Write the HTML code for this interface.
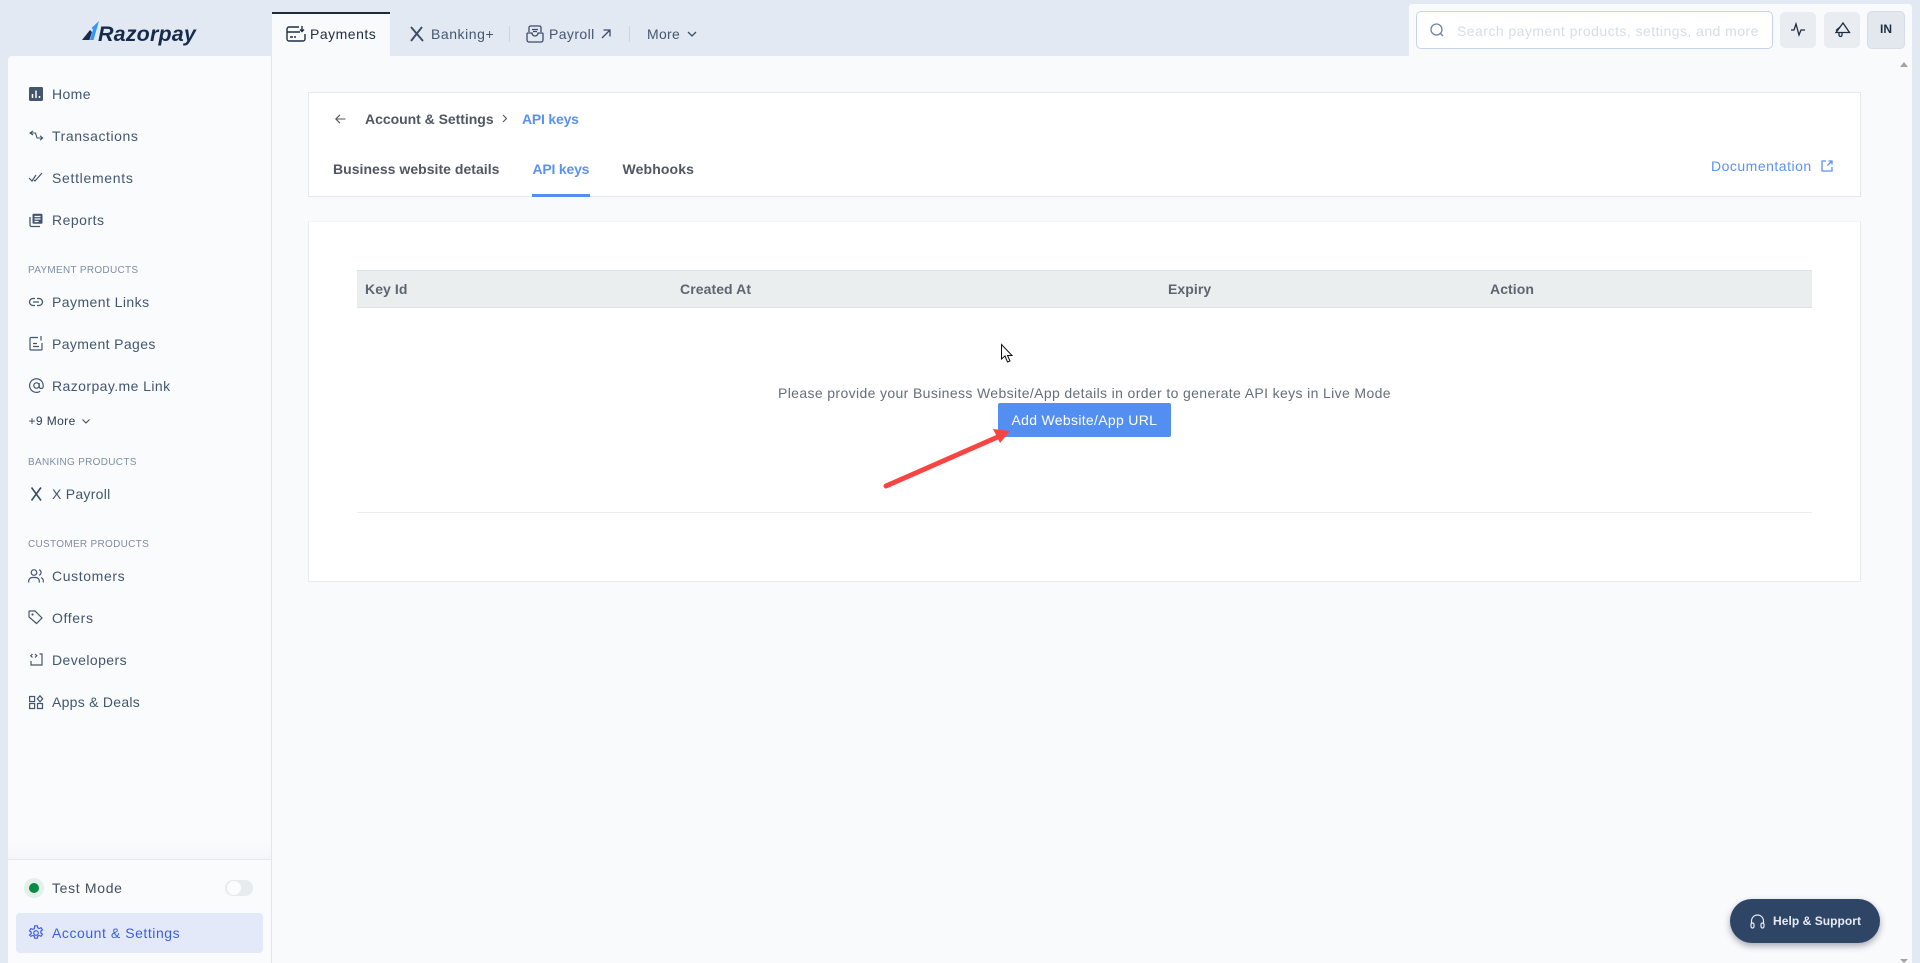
<!DOCTYPE html>
<html><head><meta charset="utf-8"><style>
*{box-sizing:border-box}
html,body{margin:0;padding:0;width:1920px;height:963px;overflow:hidden;background:#e3e9f3;font-family:"Liberation Sans",sans-serif}
.a{position:absolute}
.t{position:absolute;white-space:nowrap;line-height:20px;height:20px;font-size:14px;letter-spacing:.42px}
.n{color:#44566f;left:52px}
.h{color:#7f8da3;left:28px;font-size:10px;letter-spacing:.3px;line-height:14px;height:14px}
svg{position:absolute;overflow:visible;fill:none}
.b{font-weight:bold;color:#505662;letter-spacing:.2px}
.th{font-weight:bold;color:#5d6570;top:279px;letter-spacing:.08px}
</style></head><body>
<div class="a" style="left:8px;top:56px;width:264px;height:907px;background:#f9fbfd;border-right:1px solid #e1e5ec;border-radius:4px 0 0 0"></div>
<div class="a" style="left:272px;top:56px;width:1640px;height:907px;background:#f9fafc"></div>
<div class="a" style="left:1409px;top:4px;width:503px;height:52px;background:#f9fafc;border-radius:3px 3px 0 0"></div>

<!-- logo -->
<svg style="left:82px;top:20px" width="20" height="21" viewBox="0 0 20 21"><path d="M0 20 L8 10 L10 12 L7.500 20 Z" fill="#172b4d"/><path d="M9.500 8 L17 1 L11.500 20 H8 L11 9.500Z" fill="#3395ff"/></svg>
<div class="t" style="left:98px;top:21px;font-size:21.5px;height:26px;line-height:26px;font-weight:bold;font-style:italic;color:#172b4d;letter-spacing:.15px">Razorpay</div>

<!-- top tabs -->
<div class="a" style="left:272px;top:12px;width:118px;height:44px;background:#f9fafc;border-top:2px solid #1a2a40"></div>
<svg style="left:286px;top:26px" width="20" height="16" viewBox="0 0 20 16" stroke="#1f2d42" stroke-width="1.4"><path d="M13 1H3a2 2 0 0 0-2 2v10a2 2 0 0 0 2 2h14a2 2 0 0 0 2-2V8M1 6h13"/><path d="M4 11h3M8 11h2"/><path d="M16 0v5M14 3.500l2 2 2-2"/></svg>
<div class="t" style="left:310px;top:24px;color:#1f2d42;letter-spacing:.5px">Payments</div>
<svg style="left:410px;top:26px" width="14" height="16" viewBox="0 0 14 16" stroke="#3b4d66" stroke-width="1.900"><path d="M1 1 L13 15M12 1 L1 15"/></svg>
<div class="t" style="left:431px;top:24px;color:#44566f;letter-spacing:.55px">Banking+</div>
<div class="a" style="left:509px;top:26px;width:1px;height:16px;background:#ccd4e0"></div>
<svg style="left:526px;top:25px" width="18" height="18" viewBox="0 0 18 18" stroke="#3b4d66" stroke-width="1.300"><path d="M3 7V2.500A1.500 1.500 0 0 1 4.500 1h9A1.500 1.500 0 0 1 15 2.500V7"/><path d="M1 9a1 1 0 0 1 1-1h4a3 3 0 0 0 6 0h4a1 1 0 0 1 1 1v6a2 2 0 0 1-2 2H3a2 2 0 0 1-2-2z"/><path d="M6 4.500h6M7 6.500h4"/></svg>
<div class="t" style="left:549px;top:24px;color:#44566f;letter-spacing:.4px">Payroll</div>
<svg style="left:601px;top:29px" width="10" height="10" viewBox="0 0 10 10" stroke="#3b4d66" stroke-width="1.300"><path d="M1 9L9 1M2.500 1H9V7.500"/></svg>
<div class="a" style="left:629px;top:26px;width:1px;height:16px;background:#ccd4e0"></div>
<div class="t" style="left:647px;top:24px;color:#44566f;letter-spacing:.3px">More</div>
<svg style="left:687px;top:31px" width="10" height="6" viewBox="0 0 10 6" stroke="#3b4d66" stroke-width="1.300"><path d="M1 1l4 4 4-4"/></svg>

<!-- search -->
<div class="a" style="left:1416px;top:11px;width:357px;height:38px;background:#fff;border:1px solid #c6d3e8;border-radius:5px"></div>
<svg style="left:1430px;top:23px" width="14" height="14" viewBox="0 0 14 14" stroke="#6e87a8" stroke-width="1.300"><circle cx="6.500" cy="6.500" r="5.500"/><path d="M10.500 10.500L13 13"/></svg>
<div class="t" style="left:1457px;top:21px;color:#d7dde6;letter-spacing:.45px">Search payment products, settings, and more</div>
<div class="a" style="left:1780px;top:12px;width:36px;height:36px;background:#e9edf1;border-radius:5px"></div>
<svg style="left:1791px;top:23px" width="14" height="13" viewBox="0 0 14 13" stroke="#1f2d42" stroke-width="1.300"><path d="M0 7h3L5 1l3 11 2-5h4"/></svg>
<div class="a" style="left:1824px;top:12px;width:36px;height:36px;background:#e9edf1;border-radius:5px"></div>
<svg style="left:1835px;top:22px" width="15" height="15" viewBox="0 0 15 15" stroke="#1f2d42" stroke-width="1.300"><path d="M8 1L14.500 10.500 1 10.500z M4 10.500v2.500a1.500 1.500 0 0 0 3 0v-2"/><path d="M1 8.500L5 5"/></svg>
<div class="a" style="left:1867px;top:11px;width:38px;height:38px;background:#e3e8ee;border:1px solid #d7dde6;border-radius:5px"></div>
<div class="t" style="left:1867px;width:38px;text-align:center;top:19px;font-size:12px;font-weight:bold;color:#1f2d42;letter-spacing:0">IN</div>
<div class="a" style="left:1900px;top:62px;border-left:4.500px solid transparent;border-right:4.500px solid transparent;border-bottom:5px solid #a3a3a3"></div>
<div class="a" style="left:1900px;top:959px;border-left:4.500px solid transparent;border-right:4.500px solid transparent;border-top:4px solid #a3a3a3"></div>

<!-- sidebar -->
<svg style="left:29px;top:87px" width="14" height="14" viewBox="0 0 14 14"><rect width="14" height="14" rx="1.500" fill="#44566f"/><path d="M3.500 7v4M7 3.500V11M10.500 9v2" stroke="#f9fbfd" stroke-width="1.500"/></svg>
<div class="t n" style="top:84px;letter-spacing:.38px">Home</div>
<svg style="left:29px;top:130px" width="14" height="12" viewBox="0 0 14 12" stroke="#44566f" stroke-width="1.100"><path d="M4 1L1 3 4 5M1 3h5.500l1.500 5h5.500M11 5.800L13.700 8 11 10.200"/></svg>
<div class="t n" style="top:126px;letter-spacing:.57px">Transactions</div>
<svg style="left:29px;top:172px" width="14" height="10" viewBox="0 0 14 10" stroke="#44566f" stroke-width="1.200"><path d="M0 6l3 3 4-6M5 8l1 1 7-8"/></svg>
<div class="t n" style="top:168px;letter-spacing:.69px">Settlements</div>
<svg style="left:29px;top:213px" width="14" height="14" viewBox="0 0 14 14" stroke="#44566f" stroke-width="1.300"><path d="M1 4v8a1.500 1.500 0 0 0 1.500 1.500H11"/><rect x="3.500" y=".7" width="10" height="10" rx="1" fill="#44566f" stroke="none"/><path d="M5.500 3.500h6M5.500 6h6M5.500 8.500h4" stroke="#f9fbfd"/></svg>
<div class="t n" style="top:210px;letter-spacing:.5px">Reports</div>
<div class="t h" style="top:264px">PAYMENT PRODUCTS</div>
<svg style="left:29px;top:297px" width="14" height="10" viewBox="0 0 14 10" stroke="#44566f" stroke-width="1.300"><path d="M6 1.500H4a3.500 3.500 0 0 0 0 7h2M8 1.500h2a3.500 3.500 0 0 1 0 7H8M4 5h6"/></svg>
<div class="t n" style="top:292px;letter-spacing:.44px">Payment Links</div>
<svg style="left:29px;top:336px" width="14" height="15" viewBox="0 0 14 15" stroke="#44566f" stroke-width="1.200"><path d="M9 1.500H2a1 1 0 0 0-1 1v10.500a1 1 0 0 0 1 1h10a1 1 0 0 0 1-1V7M4 7.500h4M4 10.500h6"/><path d="M12 0v4.500"/></svg>
<div class="t n" style="top:334px;letter-spacing:.38px">Payment Pages</div>
<svg style="left:29px;top:378px" width="15" height="15" viewBox="0 0 15 15" stroke="#44566f" stroke-width="1.200"><circle cx="7.500" cy="7.500" r="2.700"/><path d="M10.200 5v3.500a2 2 0 0 0 4 0v-1a6.800 6.800 0 1 0-3 5.700"/></svg>
<div class="t n" style="top:376px">Razorpay.me Link</div>
<div class="t" style="left:28.500px;top:411px;font-size:12px;color:#2e3f58;letter-spacing:.4px">+9 More</div>
<svg style="left:82px;top:419px" width="8" height="5" viewBox="0 0 8 5" stroke="#3b4d66" stroke-width="1.100"><path d="M.5.500L4 4 7.500.500"/></svg>
<div class="t h" style="top:456px">BANKING PRODUCTS</div>
<svg style="left:31px;top:487px" width="11" height="14" viewBox="0 0 11 14" stroke="#3b4d66" stroke-width="1.600"><path d="M.500.500L10 13.500M10 .500L.500 13.500"/></svg>
<div class="t n" style="top:484px;letter-spacing:.27px">X Payroll</div>
<div class="t h" style="top:538px">CUSTOMER PRODUCTS</div>
<svg style="left:28px;top:569px" width="16" height="14" viewBox="0 0 16 14" stroke="#44566f" stroke-width="1.200"><circle cx="6" cy="3.500" r="2.800"/><path d="M.7 13.500v-1.500a3.500 3.500 0 0 1 3.500-3.500h3.600a3.500 3.500 0 0 1 3.500 3.500v1.500M11 .8a2.800 2.800 0 0 1 0 5.400M13 8.700a3.500 3.500 0 0 1 2.300 3.300v1.500"/></svg>
<div class="t n" style="top:566px;letter-spacing:.62px">Customers</div>
<svg style="left:28px;top:610px" width="15" height="15" viewBox="0 0 15 15" stroke="#44566f" stroke-width="1.200"><path d="M1 1.500a.500.500 0 0 1 .500-.500H7l7 7-5.500 5.500-7.500-6.500z"/><circle cx="4.500" cy="4.500" r=".5" fill="#44566f"/></svg>
<div class="t n" style="top:608px;letter-spacing:.62px">Offers</div>
<svg style="left:30px;top:653px" width="13" height="13" viewBox="0 0 13 13" stroke="#44566f" stroke-width="1.200"><path d="M1 8v4h11V1H9.500"/><path d="M2.500 1L.7 2.700 2.500 4.500M5 1l1.800 1.700L5 4.500"/></svg>
<div class="t n" style="top:650px">Developers</div>
<svg style="left:29px;top:695px" width="14" height="14" viewBox="0 0 14 14" stroke="#44566f" stroke-width="1.200"><rect x=".6" y="1.500" width="5" height="5"/><rect x=".6" y="8.500" width="5" height="5"/><rect x="8.500" y="8.500" width="5" height="5"/><path d="M11 .8L13.700 3.800 11 6.800 8.300 3.800z"/></svg>
<div class="t n" style="top:692px;letter-spacing:.27px">Apps &amp; Deals</div>

<div class="a" style="left:8px;top:840px;width:263px;height:19px;background:linear-gradient(#f9fbfd,#f4f6f9)"></div>
<div class="a" style="left:8px;top:859px;width:263px;height:1px;background:#e4e8ee"></div>
<div class="a" style="left:24px;top:878px;width:20px;height:20px;border-radius:50%;background:#e3f1ea"></div>
<div class="a" style="left:29px;top:883px;width:10px;height:10px;border-radius:50%;background:#0b8a45"></div>
<div class="t" style="left:52px;top:878px;color:#46505f;letter-spacing:.67px">Test Mode</div>
<div class="a" style="left:225px;top:880px;width:28px;height:16px;border-radius:8px;background:#e8ebee"></div>
<div class="a" style="left:227px;top:881px;width:14px;height:14px;border-radius:50%;background:#fbfcfd"></div>
<div class="a" style="left:16px;top:913px;width:247px;height:40px;border-radius:4px;background:#e4e9fa"></div>
<svg style="left:28px;top:925px" width="16" height="16" viewBox="0 0 16 16" stroke="#3d5ce8" stroke-width="1.200"><circle cx="8" cy="8" r="2.300"/><path d="M6.700.8h2.600l.4 2 1.500.7 1.900-.8 1.300 2.200-1.600 1.300v1.600l1.600 1.300-1.300 2.200-1.900-.8-1.500.7-.4 2H6.700l-.4-2-1.500-.7-1.900.8L1.600 10l1.600-1.300V7.100L1.600 5.800l1.300-2.200 1.900.8 1.500-.7z"/></svg>
<div class="t" style="left:52px;top:923px;color:#3d5ce8;letter-spacing:.55px">Account &amp; Settings</div>

<!-- card 1 -->
<div class="a" style="left:308px;top:92px;width:1553px;height:105px;background:#fff;border:1px solid #e5e8ed"></div>
<svg style="left:335px;top:114px" width="11" height="10" viewBox="0 0 11 10" stroke="#505662" stroke-width="1.100"><path d="M10.500 5H1M5 .8L.8 5 5 9.200"/></svg>
<div class="t b" style="left:365px;top:109px;letter-spacing:-.03px">Account &amp; Settings</div>
<svg style="left:502px;top:114px" width="6" height="9" viewBox="0 0 6 9" stroke="#505662" stroke-width="1.100"><path d="M1 1l3.500 3.500L1 8"/></svg>
<div class="t" style="left:522px;top:109px;font-weight:bold;color:#5b92f0;letter-spacing:-.2px">API keys</div>
<div class="t b" style="left:333px;top:159px;letter-spacing:.03px">Business website details</div>
<div class="t" style="left:532.500px;top:159px;font-weight:bold;color:#5b92f0;letter-spacing:-.2px">API keys</div>
<div class="t b" style="left:622.500px;top:159px;letter-spacing:.13px">Webhooks</div>
<div class="a" style="left:532px;top:194px;width:58px;height:3px;background:#528ff0"></div>
<div class="t" style="left:1711px;top:156px;color:#5b92f0;letter-spacing:.5px">Documentation</div>
<svg style="left:1821px;top:160px" width="12" height="12" viewBox="0 0 12 12" stroke="#5b92f0" stroke-width="1.300"><path d="M5 1H1v10h10V7M6.500 5.500L11 1M7.500 1H11v3.500"/></svg>

<!-- card 2 -->
<div class="a" style="left:308px;top:221px;width:1553px;height:361px;background:#fff;border:1px solid #e8ebef;border-top-color:#f3f5f7"></div>
<div class="a" style="left:357px;top:270px;width:1455px;height:38px;background:#ebeeef;border-top:1px solid #dfe3e6;border-bottom:1px solid #dfe3e6"></div>
<div class="t th" style="left:365px">Key Id</div>
<div class="t th" style="left:680px">Created At</div>
<div class="t th" style="left:1168px">Expiry</div>
<div class="t th" style="left:1490px">Action</div>
<div class="t" style="left:778px;top:383px;color:#666e7a;letter-spacing:.367px">Please provide your Business Website/App details in order to generate API keys in Live Mode</div>
<div class="a" style="left:998px;top:403px;width:173px;height:34px;background:#528ff0;border-radius:2px"></div>
<div class="t" style="left:1011.500px;top:410px;color:#fff;letter-spacing:.31px">Add Website/App URL</div>
<div class="a" style="left:357px;top:512px;width:1455px;height:1px;background:#eceff1"></div>

<!-- arrow -->
<svg style="left:880px;top:425px" width="140" height="65" viewBox="0 0 140 65"><path d="M6 61L120 11" stroke="#f94444" stroke-width="5" stroke-linecap="round"/><path d="M130 6L113 4 120 18z" fill="#f94444"/></svg>
<!-- cursor -->
<svg style="left:1001px;top:344px" width="12" height="19" viewBox="0 0 12 19"><path d="M.5.500V15l3.500-3 2.500 6 2.500-1-2.500-5.500H11z" fill="#fff" stroke="#111" stroke-width="1"/></svg>

<!-- help -->
<div class="a" style="left:1730px;top:899px;width:150px;height:44px;border-radius:22px;background:#2f4566;box-shadow:0 3px 7px rgba(40,50,70,.4)"></div>
<svg style="left:1750px;top:914px" width="15" height="15" viewBox="0 0 15 15" stroke="#e6ebf2" stroke-width="1.200"><path d="M1.500 10V7a6 6 0 0 1 12 0v3"/><rect x="1" y="9" width="3" height="5" rx="1.500"/><rect x="11" y="9" width="3" height="5" rx="1.500"/></svg>
<div class="t" style="left:1773px;top:911px;color:#e6ebf2;font-size:12px;font-weight:bold;letter-spacing:.05px">Help &amp; Support</div>
</body></html>
